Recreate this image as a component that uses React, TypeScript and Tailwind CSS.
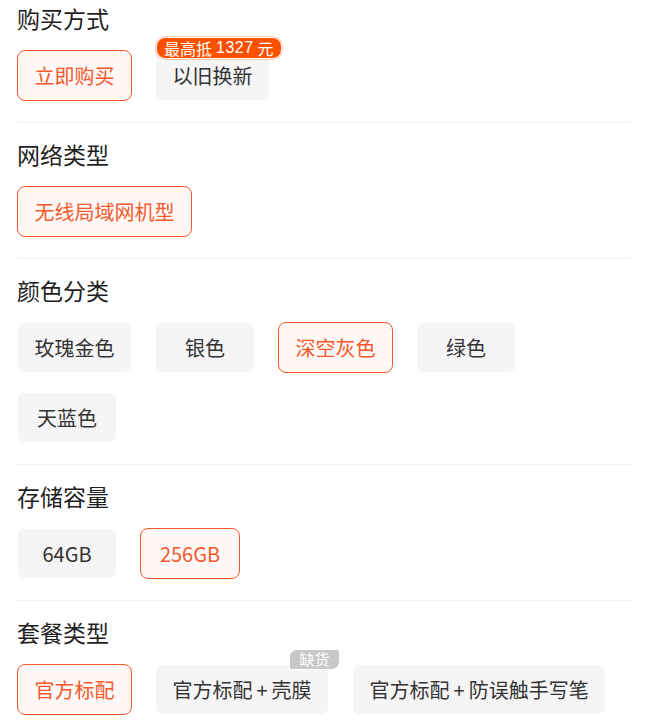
import React from 'react';

type Opt = {
    label: React.ReactNode;
    selected?: boolean;
    badge?: 'promo' | 'soldout';
};

type Group = {
    title: string;
    options: Opt[];
};

const plus = <span className="px-[4px]">+</span>;

const groups: Group[] = [
    {
        title: '购买方式',
        options: [
            { label: '立即购买', selected: true },
            { label: '以旧换新', badge: 'promo' },
        ],
    },
    {
        title: '网络类型',
        options: [{ label: '无线局域网机型', selected: true }],
    },
    {
        title: '颜色分类',
        options: [
            { label: '玫瑰金色' },
            { label: '银色' },
            { label: '深空灰色', selected: true },
            { label: '绿色' },
            { label: '天蓝色' },
        ],
    },
    {
        title: '存储容量',
        options: [{ label: '64GB' }, { label: '256GB', selected: true }],
    },
    {
        title: '套餐类型',
        options: [
            { label: '官方标配', selected: true },
            { label: <>官方标配{plus}壳膜</>, badge: 'soldout' },
            { label: <>官方标配{plus}防误触手写笔</> },
        ],
    },
];

const OptionButton: React.FC<{ opt: Opt }> = ({ opt }) => {
    return (
        <div className="relative">
            {opt.badge === 'promo' && (
                <span className="absolute left-[1px] -top-[13px] z-10 flex h-[22px] items-center whitespace-nowrap rounded-[9px] border border-white bg-[#ff5000] px-[7px] text-[16px] text-white shadow-[0_0_0_1px_rgba(255,120,60,0.35)]">
                    最高抵
                    <span className="px-[4px] tracking-[0.5px]" style={{ fontFamily: '"Liberation Sans", sans-serif' }}>1327</span>
                    元
                </span>
            )}
            {opt.badge === 'soldout' && (
                <span className="absolute -right-[11px] -top-[15px] z-10 flex h-[21px] w-[51px] items-center justify-center rounded-tl-[8px] rounded-tr-[3px] rounded-br-[8px] border border-white bg-[#c8c8c8] text-[15px] text-white">
                    缺货
                </span>
            )}
            <button
                type="button"
                className={
                    opt.selected
                        ? 'flex h-[51px] min-w-[100px] items-center justify-center whitespace-nowrap rounded-[8px] border-[1.5px] border-[#f5592b] bg-[#fff8f6] px-[16.5px] text-[20px] text-[#f5592b]'
                        : 'flex h-[51px] min-w-[100px] items-center justify-center whitespace-nowrap rounded-[8px] border border-white bg-[#f5f5f5] px-[16.5px] text-[20px] text-[#333333]'
                }
            >
                {opt.label}
            </button>
        </div>
    );
};

const App: React.FC = () => {
    return (
        <div
            className="min-h-screen bg-white px-[17px]"
            style={{ fontFamily: '"Noto Sans CJK SC", "Noto Sans", sans-serif' }}
        >
            {groups.map((g, i) => (
                <section
                    key={g.title}
                    className={`${i === 0 ? 'pt-[2px]' : 'pt-[15px]'} pb-[21px] ${i < groups.length - 1 ? 'border-b border-[#efefef]' : ''}`}
                >
                    <h3 className="h-[32px] text-[23px] leading-[32px] text-[#1f1f1f]">{g.title}</h3>
                    <div className="mt-[16px] flex flex-wrap gap-x-[23px] gap-y-[19px]">
                        {g.options.map((o, j) => (
                            <OptionButton key={j} opt={o} />
                        ))}
                    </div>
                </section>
            ))}
        </div>
    );
};

export default App;
